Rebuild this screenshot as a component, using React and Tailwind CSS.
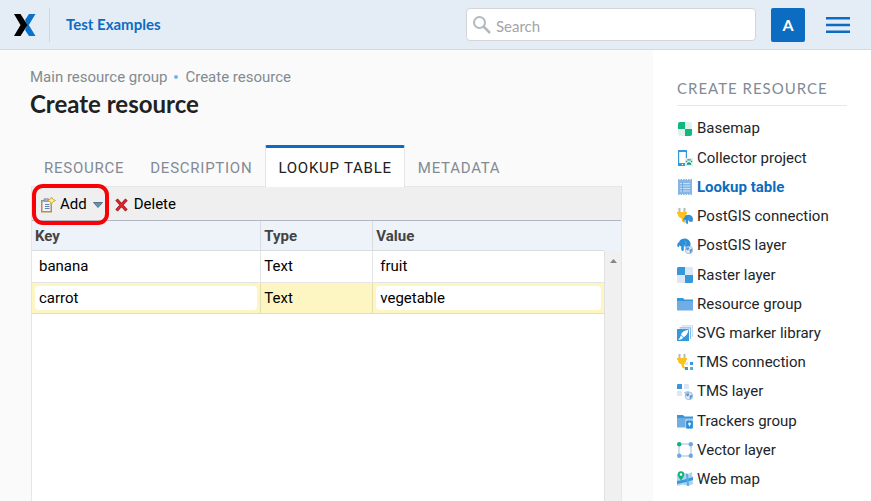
import React from "react";

const Plug = () => (
  <>
    <path d="M2.500 0v4M7.500 0v4" stroke="#b5b9bd" strokeWidth="2" />
    <path d="M0 4h10v2H9.300q0 3.500-2.300 4.500V12q.5 1.200 2 1.200v1.600q-4 .2-4.300-3v-1.300Q1 9.500.8 6H0z" fill="#fcc21b" />
  </>
);

const Elephant = () => (
  <>
    <path d="M2.500 5Q3 1 8.500 .5Q14.500 .5 16 6.500l-.5 5H10V9.500L8 10v4q-.5 1.800-2 1.200Q4.500 14.500 5 9.500Q2.500 10 2.200 7.500z" fill="#2e8fd8" />
    <path d="M3 5Q0 5.500.3 9Q.8 11 2.500 10.800V9Q1.500 8 3.500 7z" fill="#2e8fd8" />
    <path d="M8.500 3.500q2.500.5 2 3.500t-3 2" fill="none" stroke="#79b8ea" strokeWidth=".7" />
  </>
);

const Globe = () => (
  <>
    <circle cx="12" cy="12" r="3.800" fill="#e3edf8" stroke="#8db4e0" strokeWidth=".8" />
    <path d="M9 10l2.500-1 1 1.500-1.500 2-1.500-.5zM12.500 12l2-1.500.8 1.500-1.500 3h-1z" fill="#5d97d4" />
  </>
);

const icons = {
  basemap: (
    <>
      <rect x="1" y="1" width="14" height="14" rx="2" fill="#e3f1ea" />
      <path d="M3 1h5v7H1V3a2 2 0 0 1 2-2zM8 8h7v5a2 2 0 0 1-2 2H8z" fill="#0fb97d" />
    </>
  ),
  collector: (
    <>
      <path d="M1 0h9v16H1z" fill="#3498db" />
      <path d="M2.200 2h6.600v11H2.200z" fill="#fff" />
      <circle cx="5.500" cy="14.500" r=".7" fill="#fff" />
      <path d="M8 8h8v8H8z" fill="#e1efee" />
      <path d="M9.800 14.500q0-1.300 1.200-2 1-.6 2 0 1.200.7 1.200 2-1 .8-2.200 0-1.200.8-2.200 0z" fill="#139c78" />
      <circle cx="9.500" cy="11.500" r=".8" fill="#139c78" />
      <circle cx="11.100" cy="9.900" r=".8" fill="#139c78" />
      <circle cx="13" cy="9.900" r=".8" fill="#139c78" />
      <circle cx="14.600" cy="11.500" r=".8" fill="#139c78" />
    </>
  ),
  lookup: (
    <>
      <path d="M1 1h14v14H1z" fill="#86b5e6" />
      <path d="M1 .7h14M1 15.300h14" stroke="#86b5e6" strokeWidth="1.400" strokeDasharray="1.500 1" />
      <path d="M3 4.500h10M3 7h10M3 9.500h10M3 12h10" stroke="#c8def5" strokeWidth="1" />
      <path d="M5.500 3v10" stroke="#69a3de" strokeWidth=".8" />
    </>
  ),
  postgisConnection: (
    <>
      <Plug />
      <g transform="translate(6 6.500) scale(.62)"><Elephant /></g>
    </>
  ),
  postgisLayer: (
    <>
      <g transform="scale(.85)"><Elephant /></g>
      <Globe />
    </>
  ),
  raster: (
    <>
      <rect width="16" height="16" rx="1.500" fill="#dbe7f6" />
      <path d="M1.500 0H8v8H0V1.500A1.500 1.500 0 0 1 1.500 0zM8 8h8v6.500a1.500 1.500 0 0 1-1.500 1.500H8z" fill="#3498db" />
    </>
  ),
  folder: (
    <>
      <path d="M0 2h6l1.500 1.500H16V6H0z" fill="#3498db" />
      <path d="M0 5h16v9.500H0z" fill="#6fade2" />
    </>
  ),
  svgLibrary: (
    <>
      <path d="M4.500 .8h11v11" fill="none" stroke="#c5dcf4" strokeWidth="1.200" />
      <path d="M2.500 2.800h11v11" fill="none" stroke="#8bbbe8" strokeWidth="1.200" />
      <path d="M0 4h12v12H0z" fill="#3498db" />
      <path d="M11.500 4.500Q5 6 4 9.800l2.800 2.400Q11 9.500 11.500 4.500zM3.800 10.400l2.400 2.200Q5 15.300 1.200 14.500 3 13.500 3.800 10.400z" fill="#fff" />
    </>
  ),
  tmsConnection: (
    <>
      <Plug />
      <path d="M8 8h3v3H8zM13 13h3v3h-3z" fill="#dbe7f6" />
      <path d="M13 8h3v3h-3zM8 13h3v3H8z" fill="#3498db" />
      <path d="M13 13h3v3h-3z" fill="#5aa9e0" />
    </>
  ),
  tmsLayer: (
    <>
      <path d="M0 1a1 1 0 0 1 1-1h4v5H0z" fill="#3498db" />
      <path d="M7 0h4a1 1 0 0 1 1 1v4H7zM0 7h5v5H1a1 1 0 0 1-1-1z" fill="#dbe7f6" />
      <path d="M7 8l4-1 4 2-1 5-4 1z" fill="#a6caee" />
      <Globe />
    </>
  ),
  trackers: (
    <>
      <path d="M0 2h6l1.500 1.500H16V6H0z" fill="#3498db" />
      <path d="M0 5h16v9.500H0z" fill="#6fade2" />
      <path d="M8.500 6.500H16V16H8.500z" fill="#d9eafa" />
      <path d="M9.500 8h6v7h-6zM11.200 7v9M13.800 7v9" fill="#2e8fd8" stroke="#2e8fd8" strokeWidth=".8" />
      <circle cx="12.500" cy="10.800" r="1.300" fill="#fff" />
      <path d="M11.500 11.500h2l-1 2.200z" fill="#fff" />
    </>
  ),
  vector: (
    <>
      <path d="M2 2h12v12H2z" fill="none" stroke="#9dbde4" strokeWidth="1" />
      <circle cx="2.200" cy="2.200" r="2.200" fill="#12b07a" />
      <circle cx="13.800" cy="2.200" r="2.200" fill="#71a5dc" />
      <circle cx="2.200" cy="13.800" r="2.200" fill="#71a5dc" />
      <circle cx="13.800" cy="13.800" r="2.200" fill="#71a5dc" />
    </>
  ),
  webmap: (
    <>
      <path d="M0 3l5-1.500L11 3l4-2 1 12-5 2-5-1.500L0 15z" fill="#a9d3f1" />
      <path d="M0 10l6-1 10-3v3L9 11l-9 2z" fill="#3498db" />
      <path d="M9 2.500l2 .5 1 12-2-.5z" fill="#5aa9e0" />
      <path d="M4 9.500Q.8 6 .8 3.500a3.200 3.200 0 0 1 6.400 0Q7.200 6 4 9.500z" fill="#12b07a" />
      <circle cx="4" cy="3.500" r="1.300" fill="#fff" />
    </>
  ),
};

const resources = [
  ["basemap", "Basemap"],
  ["collector", "Collector project"],
  ["lookup", "Lookup table"],
  ["postgisConnection", "PostGIS connection"],
  ["postgisLayer", "PostGIS layer"],
  ["raster", "Raster layer"],
  ["folder", "Resource group"],
  ["svgLibrary", "SVG marker library"],
  ["tmsConnection", "TMS connection"],
  ["tmsLayer", "TMS layer"],
  ["trackers", "Trackers group"],
  ["vector", "Vector layer"],
  ["webmap", "Web map"],
];

const tabs = ["Resource", "Description", "Lookup table", "Metadata"];

const rows = [
  { key: "banana", type: "Text", value: "fruit", selected: false },
  { key: "carrot", type: "Text", value: "vegetable", selected: true },
];

function Header() {
  return (
    <header className="flex h-[50px] shrink-0 items-center border-b border-[#cbdcf0] bg-[#e4ecf6] pl-[14px] pr-[21px] font-['Lato',sans-serif]">
      <a href="#" aria-label="Home" className="shrink-0">
        <svg width="22" height="22" viewBox="0 0 22 22">
          <path d="M15 0h6.500L14.800 11l6.700 11H15l-4-6 2-5-2-5z" fill="#0b72cc" />
          <path d="M0 0h6.500l7 11-7 11H0l6.500-11z" fill="#000" />
        </svg>
      </a>
      <div className="ml-[13px] h-[34px] w-px bg-[#c5d9ed]" />
      <a href="#" className="ml-4 whitespace-nowrap text-[15px] font-bold text-[#0b6cc1]">Test Examples</a>
      <div className="ml-auto flex h-[33px] w-[290px] items-center gap-[5px] rounded border border-[#d3d5d8] bg-white px-1.5">
        <svg width="18" height="18" viewBox="0 0 18 18" fill="none" stroke="#b3b9bf" className="shrink-0">
          <circle cx="6.500" cy="6.500" r="5.500" strokeWidth="2" />
          <path d="M10.500 10.500L17 17" strokeWidth="2.500" />
        </svg>
        <input type="text" aria-label="Search" placeholder="Search" className="h-7 w-full min-w-0 bg-transparent pt-0.5 text-[15px] outline-none placeholder:text-[#a2a5a9]" />
      </div>
      <button type="button" className="ml-[15px] h-[34px] w-[34px] shrink-0 rounded-[2px] bg-[#0b6cc1] text-[16px] font-bold text-white">A</button>
      <button type="button" aria-label="Menu" className="ml-[21px] shrink-0">
        <svg width="24" height="16" viewBox="0 0 24 16" fill="#0b6cc1" className="block">
          <path d="M0 0h24v2.500H0zM0 6.800h24v2.500H0zM0 13.500h24V16H0z" />
        </svg>
      </button>
    </header>
  );
}

function Toolbar() {
  return (
    <div className="flex h-[34px] shrink-0 items-center border-b border-[#b0b6c6] bg-[#efefef] pl-2 pt-0.5 text-[15px] text-black">
      <div className="relative flex items-center">
        <button type="button" className="flex items-center gap-1">
          <svg width="16" height="16" viewBox="0 0 16 16">
            <path d="M1 3h11v12.500H1z" fill="#b58e50" />
            <path d="M1 3h10.500v2H1z" fill="#8994a5" />
            <path d="M2.500 4.500h8V14h-8z" fill="#eef3fc" />
            <path d="M4 1.800h4.500v2.500H4z" fill="#aab6c7" stroke="#74839a" strokeWidth=".7" />
            <path d="M5 7.500h4.500M5 9.500h4.500M5 11.500h4.500" stroke="#6380b4" strokeWidth="1" />
            <path d="M11.500 0l1.200 2.300L15.500 3.500l-2.800 1.200L11.500 7.500l-1.200-2.800L7.500 3.500l2.800-1.200z" fill="#fff3a8" stroke="#c9a529" strokeWidth=".9" />
          </svg>
          Add
        </button>
        <button type="button" aria-label="Add options" className="ml-1.5">
          <svg width="10" height="6" viewBox="0 0 10 6" className="block">
            <path d="M.5.5h9L5 5.500z" fill="#6591b2" stroke="#41637f" strokeWidth=".8" />
          </svg>
        </button>
        <div className="pointer-events-none absolute -inset-y-[9px] -left-2 -right-1.5 rounded-[11px] border-4 border-[#f80207]" />
      </div>
      <button type="button" className="ml-3 flex items-center gap-1.5">
        <svg width="13" height="14" viewBox="0 0 13 14">
          <path d="M1.500 1.500L11.500 12.500M11.500 1.500L1.500 12.500" stroke="#9c1a20" strokeWidth="3.200" />
          <path d="M1.800 1.800L11.200 12.200M11.200 1.800L1.800 12.200" stroke="#e5262d" strokeWidth="1.600" />
        </svg>
        Delete
      </button>
    </div>
  );
}

function LookupGrid() {
  return (
    <div className="flex flex-1 bg-white">
      <div className="min-w-0 flex-1">
        <table className="w-full table-fixed border-collapse text-left text-[15px] leading-5 text-black">
          <colgroup>
            <col className="w-[40%]" />
            <col className="w-[112px]" />
            <col />
          </colgroup>
          <thead>
            <tr className="h-[29px] border-b border-[#d8dde2] bg-[#edf3f8] text-[#444]">
              <th className="border-r border-[#d8dde2] px-[3px] pt-0.5 font-bold">Key</th>
              <th className="border-r border-[#d8dde2] px-[3px] pt-0.5 font-bold">Type</th>
              <th className="px-[3px] pt-0.5 font-bold">Value</th>
            </tr>
          </thead>
          <tbody>
            {rows.map((r) => (
              <tr key={r.key} className={r.selected ? "h-[31px] border-b border-[#e5deaf] bg-[#fdf6c3]" : "h-8 border-b border-[#e5e5e5]"}>
                <td className={r.selected ? "border-r border-[#e5deaf] px-[3px]" : "border-r border-[#e5e5e5] px-[3px]"}>
                  <input aria-label="Key" defaultValue={r.key} className="block h-6 w-full rounded bg-white px-1 outline-none" />
                </td>
                <td className={r.selected ? "border-r border-[#e5deaf] px-[3px]" : "border-r border-[#e5e5e5] px-[3px]"}>{r.type}</td>
                <td className="px-[3px]">
                  <input aria-label="Value" defaultValue={r.value} className="block h-6 w-full rounded bg-white px-1 outline-none" />
                </td>
              </tr>
            ))}
          </tbody>
        </table>
      </div>
      <div className="flex w-[17px] flex-col">
        <div className="h-[30px] bg-[#edf3f8]" />
        <button type="button" aria-label="Scroll up" className="flex flex-1 items-start justify-center border-l border-[#e2e2e2] bg-[#f0f0f0] pt-2">
          <svg width="7" height="4" viewBox="0 0 7 4"><path d="M3.500 0L7 4H0z" fill="#868686" /></svg>
        </button>
      </div>
    </div>
  );
}

function Sidebar() {
  return (
    <aside className="w-[218px] shrink-0 bg-white px-6 pt-7">
      <h2 className="border-b border-[#e6e8ea] pb-[6px] font-['Lato',sans-serif] text-[15px] leading-[21px] tracking-[1px] text-[#828b95]">CREATE RESOURCE</h2>
      <ul className="mt-2 grid h-[380px] auto-rows-fr text-[15px] text-[#212529]">
        {resources.map(([icon, label]) => (
          <li key={icon} className="flex items-center">
            <a href="#" className={label === "Lookup table" ? "flex items-center gap-1 whitespace-nowrap font-bold text-[#0b6cc1]" : "flex items-center gap-1 whitespace-nowrap"}>
              <svg width="16" height="16" viewBox="0 0 16 16" className="shrink-0">{icons[icon]}</svg>
              {label}
            </a>
          </li>
        ))}
      </ul>
    </aside>
  );
}

export default function App() {
  return (
    <div className="flex min-h-screen flex-col bg-[#fafafa] font-['Roboto',sans-serif]">
      <Header />
      <div className="flex flex-1">
        <main className="flex min-w-0 flex-1 flex-col pl-[30px] pr-[31px] pt-4">
          <nav aria-label="Breadcrumb" className="flex items-center gap-[7px] text-[15px] leading-[22px] text-[#828b90]">
            <a href="#">Main resource group</a>
            <span className="h-1 w-1 rounded-full bg-[#76b5e3]" />
            <a href="#">Create resource</a>
          </nav>
          <h1 className="font-['Lato',sans-serif] text-[24px] font-bold leading-8 text-[#212121]">Create resource</h1>
          <div role="tablist" className="ml-px mt-[25px] flex h-[41px] text-[15px] tracking-wider">
            {tabs.map((t) => (
              <button
                key={t}
                type="button"
                role="tab"
                aria-selected={t === "Lookup table"}
                className={
                  t === "Lookup table"
                    ? "relative -mb-px whitespace-nowrap rounded-t-[2px] border-x border-t-[3px] border-x-[#e3e5e7] border-t-[#0b6cc1] bg-white px-3 pt-0.5 uppercase text-[#212121]"
                    : "whitespace-nowrap px-[13px] pt-[5px] uppercase text-[#828b95]"
                }
              >
                {t}
              </button>
            ))}
          </div>
          <section className="ml-px flex flex-1 flex-col border-x border-t border-[#e4e6e8]">
            <Toolbar />
            <LookupGrid />
          </section>
        </main>
        <Sidebar />
      </div>
    </div>
  );
}
